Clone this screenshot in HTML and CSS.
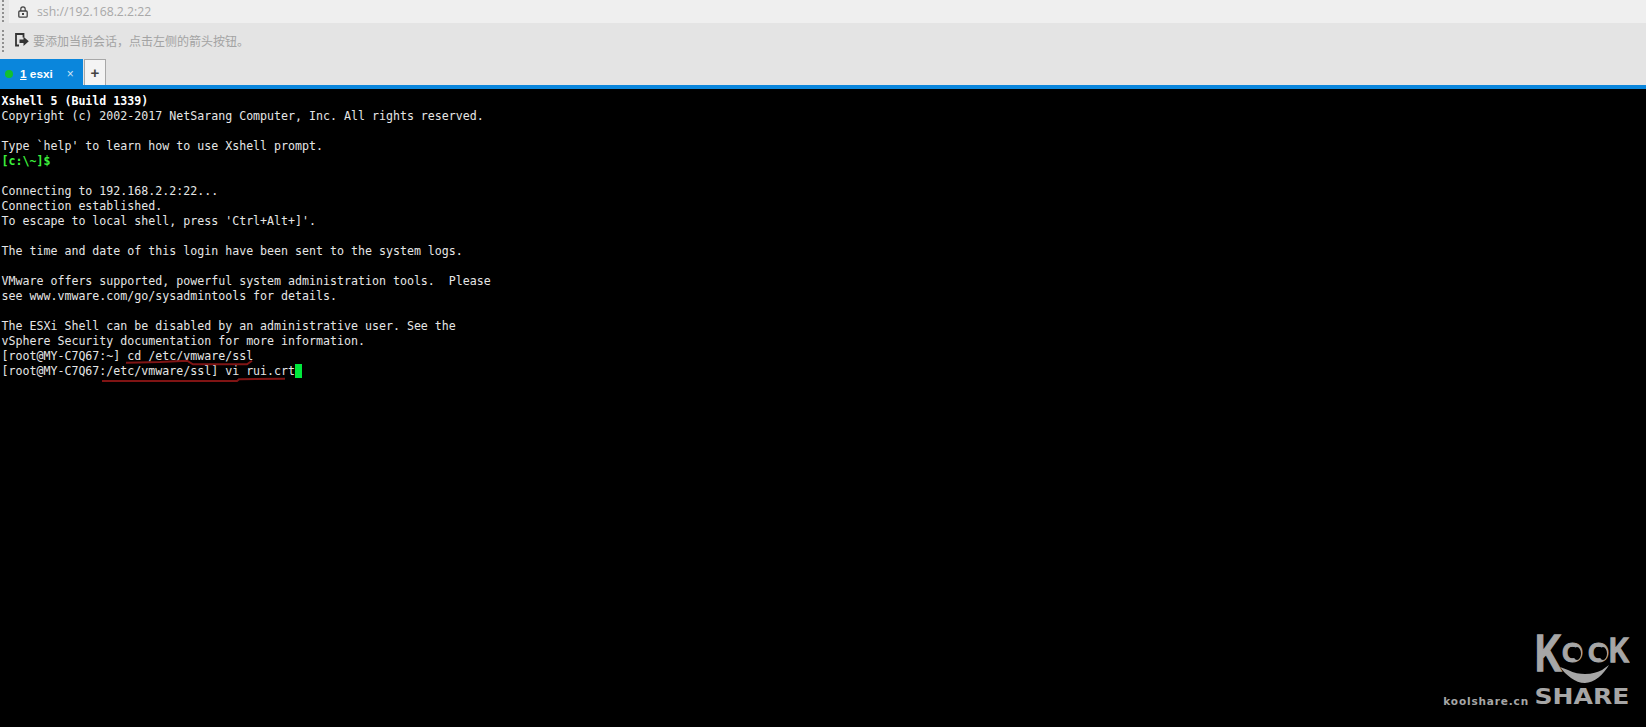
FILE: index.html
```html
<!DOCTYPE html>
<html lang="zh">
<head>
<meta charset="utf-8">
<title>Xshell</title>
<link rel="stylesheet" href="styles.css">
</head>
<body>
<div class="app">
  <div class="addr-row">
    <div class="grip"></div>
    <div class="addr">
      <svg class="lock" width="10" height="12" viewBox="0 0 10 12"><path d="M2.800 5V3a2.200 2.200 0 0 1 4.400 0V5" fill="none" stroke="#444" stroke-width="1.200"/><rect x="0.800" y="5" width="8.400" height="6.200" rx="1" fill="none" stroke="#444" stroke-width="1.300"/><rect x="4" y="7" width="2" height="2" fill="#444"/></svg>
      <span class="addr-text">ssh://192.168.2.2:22</span>
    </div>
  </div>
  <div class="hint-row">
    <div class="grip"></div>
    <svg class="hint-icon" width="14" height="14" viewBox="0 0 14 14"><path d="M4 12.500H1V1H8.500V4.500" fill="none" stroke="#333" stroke-width="1.800"/><path d="M4.500 6.500H8.500V3.800L13.800 8.300L8.500 13V10H4.500Z" fill="#333"/></svg>
    <span class="hint-text">要添加当前会话，点击左侧的箭头按钮。</span>
  </div>
  <div class="tab-row">
    <div class="tab">
      <span class="dot"></span>
      <span class="tab-label"><u>1</u> esxi</span>
      <span class="tab-close">×</span>
    </div>
    <div class="tab-add">+</div>
  </div>
  <div class="blue-bar"></div>
  <main class="term">
    <pre class="screen"><b>Xshell 5 (Build 1339)</b>
Copyright (c) 2002-2017 NetSarang Computer, Inc. All rights reserved.

Type `help' to learn how to use Xshell prompt.
<b class="green">[c:\~]$</b>

Connecting to 192.168.2.2:22...
Connection established.
To escape to local shell, press 'Ctrl+Alt+]'.

The time and date of this login have been sent to the system logs.

VMware offers supported, powerful system administration tools.  Please
see www.vmware.com/go/sysadmintools for details.

The ESXi Shell can be disabled by an administrative user. See the
vSphere Security documentation for more information.
[root@MY-C7Q67:~] cd /etc/vmware/ssl
[root@MY-C7Q67:/etc/vmware/ssl] vi rui.crt<span class="cursor"> </span></pre>
    <svg class="marks" width="320" height="60" viewBox="0 0 320 60">
      <path d="M126 32.700 L160 32 L187 30.700 L193 34.300 L247 34.300 L252 30.700" fill="none" stroke="#801414" stroke-width="2"/>
      <path d="M102 51 L237 51 L239 49.300 L285 48.700" fill="none" stroke="#801414" stroke-width="2"/>
    </svg>
    <div class="wm">
      <span class="wm-site">koolshare.cn</span>
      <div class="wm-logo">
        <div class="wm-kook"><span class="k1">K</span><span class="o">O</span><span class="o o2">O</span><span class="k2">K</span></div>
        <svg class="wm-smile" width="50" height="18" viewBox="0 0 50 18"><path d="M0 2L8 5C14 8 20 9 25 9C32 9 38 7 42 5L49 0C44 9 34 18 25 18C15 18 6 10 0 2Z" fill="#a6a6a6"/></svg>
        <div class="wm-share">SHARE</div>
      </div>
    </div>
  </main>
</div>
</body>
</html>
```

FILE: styles.css
```css
html, body { margin: 0; padding: 0; height: 100%; overflow: hidden; }
body { background: #000; font-family: "Noto Sans CJK SC", "Noto Sans", sans-serif; }
.app { display: flex; flex-direction: column; height: 727px; width: 1646px; }
.addr-row { height: 23px; display: flex; background: #e6e6e6; }
.grip { width: 2px; margin-left: 2px; flex: none; background: repeating-linear-gradient(to bottom, #8f8f8f 0 2px, transparent 2px 4px); }
.addr { flex: 1; display: flex; align-items: center; margin-left: 5px; padding-left: 9px; background: #efefef; gap: 9px; }
.lock { flex: none; }
.addr-text { font-family: "Open Sans", sans-serif; font-size: 12.250px; color: #a8a8a8; }
.hint-row { height: 35px; display: flex; align-items: center; background: #e4e4e4; box-sizing: border-box; padding-bottom: 1px; }
.hint-row .grip { height: 23px; margin-top: 2px; }
.hint-icon { margin-left: 11px; flex: none; }
.hint-text { margin-left: 4px; font-size: 12px; color: #a3a3a3; }
.tab-row { height: 27px; display: flex; align-items: flex-end; background: #e4e4e4; }
.tab { width: 83px; height: 26px; padding: 4px 0 0 5px; background: #0a86dc; display: flex; align-items: center; color: #fff; box-sizing: border-box; }
.dot { width: 8px; height: 8px; border-radius: 50%; background: #12c030; flex: none; }
.tab-label { margin-left: 7px; font-family: "Liberation Sans", sans-serif; font-weight: 700; font-size: 11.800px; }
.tab-close { margin-left: 14px; font-family: "Liberation Sans", sans-serif; font-size: 12px; color: #cfe4f5; }
.tab-add { width: 22px; height: 26px; margin-left: 1px; background: #f4f4f4; border: 1px solid #a8a8a8; border-bottom: none; box-sizing: border-box; display: flex; align-items: center; justify-content: center; font-family: "Liberation Sans", sans-serif; font-weight: 700; font-size: 15px; color: #444; }
.blue-bar { height: 4px; background: #0a86dc; }
.term { flex: 1; position: relative; background: #000; overflow: hidden; }
.screen { margin: 0; padding: 5px 0 0 1.500px; font-family: "DejaVu Sans Mono", monospace; font-size: 11.620px; line-height: 15px; color: #e6e6e6; }
.screen b { color: #fff; font-weight: 700; }
.screen b.green { color: #3cf03c; }
.cursor { background: #00e83c; }
.marks { position: absolute; left: 0; top: 241px; }
.wm { position: absolute; right: 17px; bottom: 20px; display: flex; align-items: flex-end; gap: 6px; color: #a6a6a6; }
.wm-site { font-family: "DejaVu Sans", sans-serif; font-weight: 700; font-size: 10.500px; line-height: 12px; letter-spacing: 0.850px; }
.wm-logo { width: 94px; display: flex; flex-direction: column; align-items: flex-start; }
.wm-kook { height: 37px; display: flex; align-items: flex-start; font-family: "Liberation Sans", sans-serif; font-weight: 700; -webkit-text-stroke: 1px #a6a6a6; }
.k1 { width: 27px; font-size: 37px; line-height: 37px; transform: scaleY(1.420); }
.o { position: relative; width: 21px; font-size: 27px; line-height: 37px; }
.o::after { content: ""; position: absolute; left: 11px; top: 12px; width: 8px; height: 13px; border-radius: 50%; background: #000; }
.o2 { margin-left: 5px; }
.k2 { width: 20px; font-size: 28px; line-height: 31px; transform: scaleY(1.260); }
.wm-smile { margin: -7px 0 0 25px; }
.wm-share { margin-top: 4px; width: 94px; text-align: center; font-family: "DejaVu Sans", sans-serif; font-weight: 700; font-size: 22px; line-height: 20px; transform: scaleX(1.140); }
```
